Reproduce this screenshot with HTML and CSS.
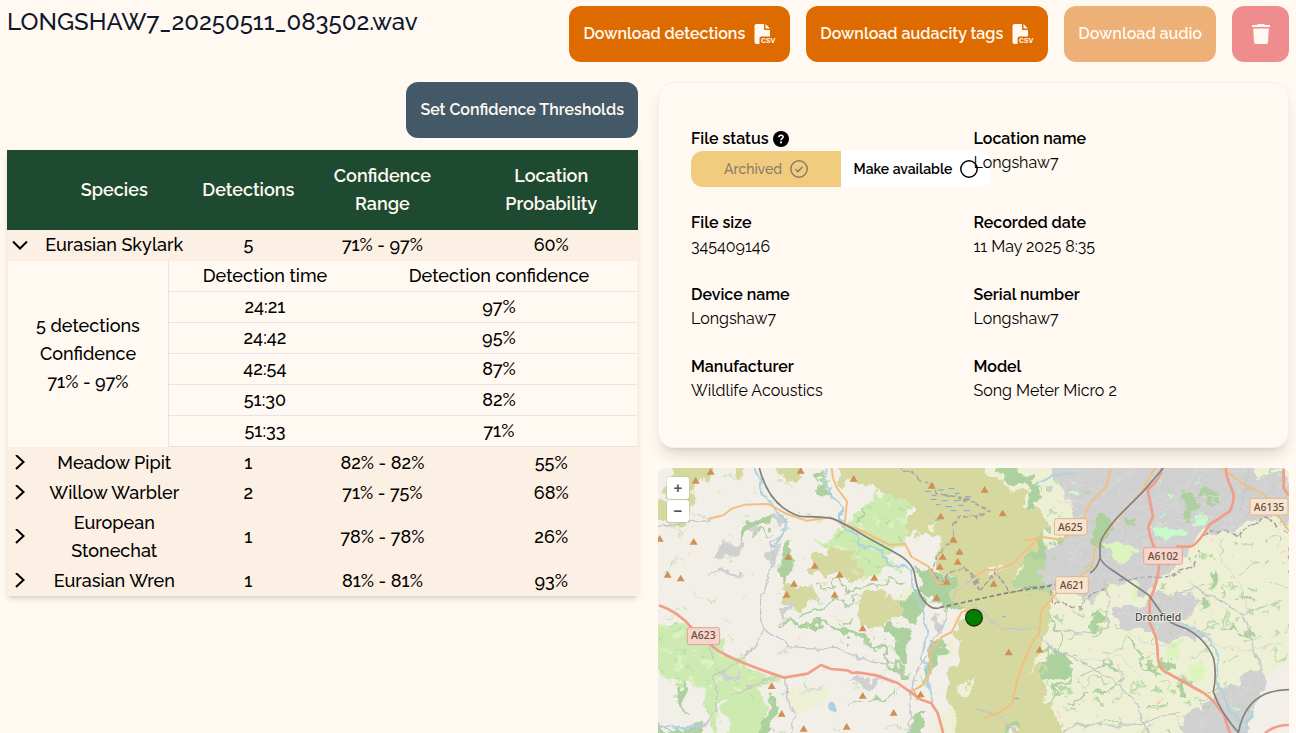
FILE: index.html
```html
<!DOCTYPE html>
<html lang="en">
<head>
<meta charset="utf-8">
<meta name="viewport" content="width=device-width, initial-scale=1">
<title>LONGSHAW7_20250511_083502.wav</title>
<link rel="stylesheet" href="styles.css">
</head>
<body>
<header class="top">
  <h1>LONGSHAW7_20250511_083502.wav</h1>
  <div class="actions">
    <button class="btn orange">Download detections
      <svg class="csv" viewBox="0 0 22 22"><path fill="currentColor" d="M2.500 1H10v5.200c0 .5.4.8.800.8H16v6.500H7.500A2 2 0 0 0 5.500 15.500V21h-3A2 2 0 0 1 .5 19V3a2 2 0 0 1 2-2zM11.500 1 16 5.500h-4.500z"/><text x="7" y="20">CSV</text></svg></button>
    <button class="btn orange">Download audacity tags
      <svg class="csv" viewBox="0 0 22 22"><path fill="currentColor" d="M2.500 1H10v5.200c0 .5.4.8.800.8H16v6.500H7.500A2 2 0 0 0 5.500 15.500V21h-3A2 2 0 0 1 .5 19V3a2 2 0 0 1 2-2zM11.500 1 16 5.500h-4.500z"/><text x="7" y="20">CSV</text></svg></button>
    <button class="btn orange" disabled>Download audio</button>
    <button class="btn red" disabled aria-label="Delete file"><svg width="20" height="22" viewBox="0 0 20 22"><path fill="currentColor" d="M7 1h6l1 1h4q1 0 1 1v1H1V3q0-1 1-1h4zM2.200 5.500h15.600L17 19q-.1 2-2 2H5q-1.900 0-2-2z"/></svg></button>
  </div>
</header>
<main class="content">
  <section class="left">
    <button class="btn slate">Set Confidence Thresholds</button>
    <table class="species">
      <colgroup><col class="c-toggle"><col class="c-name"><col class="c-count"><col class="c-range"><col></colgroup>
      <thead><tr><th></th><th>Species</th><th>Detections</th><th>Confidence<br>Range</th><th>Location<br>Probability</th></tr></thead>
      <tbody>
        <tr><td><button class="chev" aria-label="Collapse"><svg viewBox="0 0 16 16"><path d="M1 4.500 8 11.500 15 4.500"/></svg></button></td><td>Eurasian Skylark</td><td>5</td><td>71% - 97%</td><td>60%</td></tr>
        <tr><td colspan="5" class="detail">
          <div class="detail-box">
            <p>5 detections<br>Confidence<br>71% - 97%</p>
            <table class="times">
              <thead><tr><th>Detection time</th><th>Detection confidence</th></tr></thead>
              <tbody>
                <tr><td>24:21</td><td>97%</td></tr>
                <tr><td>24:42</td><td>95%</td></tr>
                <tr><td>42:54</td><td>87%</td></tr>
                <tr><td>51:30</td><td>82%</td></tr>
                <tr><td>51:33</td><td>71%</td></tr>
              </tbody>
            </table>
          </div>
        </td></tr>
        <tr><td><button class="chev" aria-label="Expand"><svg viewBox="0 0 16 16"><path d="M4 0l7.500 7L4 14"/></svg></button></td><td>Meadow Pipit</td><td>1</td><td>82% - 82%</td><td>55%</td></tr>
        <tr><td><button class="chev" aria-label="Expand"><svg viewBox="0 0 16 16"><path d="M4 0l7.500 7L4 14"/></svg></button></td><td>Willow Warbler</td><td>2</td><td>71% - 75%</td><td>68%</td></tr>
        <tr><td><button class="chev" aria-label="Expand"><svg viewBox="0 0 16 16"><path d="M4 0l7.500 7L4 14"/></svg></button></td><td>European<br>Stonechat</td><td>1</td><td>78% - 78%</td><td>26%</td></tr>
        <tr><td><button class="chev" aria-label="Expand"><svg viewBox="0 0 16 16"><path d="M4 0l7.500 7L4 14"/></svg></button></td><td>Eurasian Wren</td><td>1</td><td>81% - 81%</td><td>93%</td></tr>
      </tbody>
    </table>
  </section>
  <section class="right">
    <dl class="card">
      <div><dt>File status <svg class="help" viewBox="0 0 16 16"><circle cx="8" cy="8" r="8"/><path d="M5.900 6.200C6 4.900 6.900 4.300 8 4.300s2.100.7 2.100 1.800C10.100 7.600 8 7.600 8 9.200" fill="none" stroke="#fff" stroke-width="1.600"/><circle cx="8" cy="11.400" r="1.100" fill="#fff"/></svg></dt>
        <dd class="toggle">
          <button class="archived" disabled>Archived <svg viewBox="0 0 18 18"><circle cx="9" cy="9" r="8.200"/><path d="m5.500 9.200 2.400 2.400 4.700-4.800"/></svg></button>
          <button class="available">Make available <svg viewBox="0 0 18 18"><circle cx="9" cy="9" r="8.200"/></svg></button>
        </dd></div>
      <div><dt>Location name</dt><dd>Longshaw7</dd></div>
      <div><dt>File size</dt><dd>345409146</dd></div>
      <div><dt>Recorded date</dt><dd>11 May 2025 8:35</dd></div>
      <div><dt>Device name</dt><dd>Longshaw7</dd></div>
      <div><dt>Serial number</dt><dd>Longshaw7</dd></div>
      <div><dt>Manufacturer</dt><dd>Wildlife Acoustics</dd></div>
      <div><dt>Model</dt><dd>Song Meter Micro 2</dd></div>
    </dl>
    <div class="map">
      <svg class="tiles" viewBox="9 24 1893 795" preserveAspectRatio="xMidYMin slice" role="img" aria-label="Map of the recorder location">
        <defs>
          <filter id="rough" filterUnits="userSpaceOnUse" x="-60" y="-40" width="2040" height="920" color-interpolation-filters="sRGB">
            <feTurbulence type="fractalNoise" baseFrequency="0.018" numOctaves="4" seed="7"/>
            <feDisplacementMap in="SourceGraphic" scale="80" xChannelSelector="R" yChannelSelector="G"/>
          </filter>
          <filter id="wiggle" filterUnits="userSpaceOnUse" x="-60" y="-40" width="2040" height="920" color-interpolation-filters="sRGB">
            <feTurbulence type="fractalNoise" baseFrequency="0.025" numOctaves="3" seed="3"/>
            <feDisplacementMap in="SourceGraphic" scale="28" xChannelSelector="R" yChannelSelector="G"/>
          </filter>
          <path id="peak" d="M0-11 12 9H-12z" fill="#d08f55"/>
          <pattern id="hedge" width="260" height="210" patternUnits="userSpaceOnUse">
            <g fill="none" stroke="#b9d9a8" stroke-width="5">
              <path d="M12 40l24-12 18 4M70 95l35-18 20 6M150 30l-10 30 18 18M196 120l30-20 22 2M40 160l25 10 30-14M140 180l40-16M222 30l20 24M110 130l-12 26"/>
              <path stroke-width="10" d="M176 66l20-14M24 108l10-22M226 172l18 10"/>
            </g>
            <g fill="#f8c9ae"><path d="M60 60h6v6h-6zM120 20h8v5h-8zM205 84h6v7h-6zM88 190h9v5h-9zM170 142h6v6h-6zM10 135h6v6h-6z"/></g>
          </pattern>
          <pattern id="lanes" width="330" height="250" patternUnits="userSpaceOnUse">
            <g fill="none" stroke="#c4dfb2" stroke-width="4"><path d="M30 70l40-8 12 10M210 40l30 8M120 150l18 20 34 4M260 180l26-18M50 210l34-8"/></g>
            <g fill="#fad9c0"><path d="M100 40h10v6h-10zM180 110h7v7h-7zM290 90h9v6h-9zM20 140h7v6h-7zM220 220h9v7h-9z"/></g>
          </pattern>
          <pattern id="streets" width="120" height="110" patternUnits="userSpaceOnUse">
            <path d="M0 30l60-14 60 14M20 110l24-60 50-20L110 0M50 50l30 60M0 84l40-10" fill="none" stroke="#dddcdc" stroke-width="2"/>
            <path fill="#c3f0cf" d="M64 58l10-4 6 7-9 6z"/><path fill="#b3d6a2" d="M96 84l10-6 2 10-9 3z"/>
          </pattern>
          <pattern id="crops" width="90" height="80" patternUnits="userSpaceOnUse">
            <path d="M10 20l20-4 6 10-18 6zM60 50l16-8 8 12-14 8z" fill="#def0c4"/><path d="M50 10l14 8M8 60l20 8M70 26l-8 18" stroke="#b6daa2" stroke-width="4"/>
          </pattern>
        </defs>
        <rect x="9" y="24" width="1893" height="900" fill="#f2efe9"/>
        <g filter="url(#rough)">
          <rect x="-40" y="-20" width="1000" height="860" fill="url(#lanes)"/>
          <!-- farmland in the east -->
          <path fill="#eef0d5" d="M1020-20h960v604l-148 40-60 130-60 140H1160l-40-300z"/>
          <path fill="#eef0d5" d="M400 690l60-20 60 30-20 50-80 10zM880 690l60 20 80 150H850z"/>
          <path fill="url(#hedge)" d="M1020-20h960v604l-148 40-60 130-60 140H1160l-40-300z"/>
          <!-- pasture and woodland -->
          <g fill="#cdebb0">
            <path d="M-30 510l109-25 90 70 90 50 110 40-40 60-120 20-20 134-60-190-50 10-109-70z"/>
            <path d="M220 720l90-40 30 179H225zM560 200l60-60 70-50 60 40 20 120-80 30 40 50-100 20-90-80-60-20z"/>
            <path d="M940 740l90 30 60 79H930z"/>
          </g>
          <path fill="url(#crops)" d="M-30 510l109-25 90 70 90 50 110 40-40 60-120 20-20 134-60-190-50 10-109-70zM560 200l60-60 70-50 60 40 20 120-80 30 40 50-100 20-90-80-60-20z"/>
          <g fill="#add19e">
            <path d="M385 260l25-12-4 50-14 78h-14zM490 60l22-10 2 80-20-30zM260 190l60-20 50 15-30 16-60 10-30 20zM290 235l50-16-20 24zM690 505l70-5 20 30-15 20v60l-30 5-5-50-20-20-30-20zM740 400l50-20 20 60-20 50-50-15z"/>
            <path d="M780 330l40-10 60 50 30 10 60-50v100l-90 20-50-15-40-60zM815 540l45-20 20 30-40 80-40 60zM80 670l20 30v60l-12-10-10-50zM330 740l18-20 4 99h-28zM-30 780l99 25 60-10 40 50H-30zM750 790l60-30-20 89h-50z"/>
            <path d="M1040 24l4 34 60 18 26 36 5 120-42 76 10 60 60 20 42-30-10-90-30-40-10-30-4-100-30-60-40-24zM1320 140l40 10 15 40-40 60-30-30zM1060 150l60-25-5 55-50-20zM1170 560l60 10 25 60-60 30-40-20zM1160 610l-60 30-50 90-5 119 60-70 50-60zM1300 470l20-20 15 50-25 10zM1510 590h40l10 40-50-10zM1560 680l60-20-50 50zM1660 340l30-20-10 60-15 10zM1630 440l30-30-10 50-15 8z"/>
          </g>
          <g fill="none" stroke="#add19e" stroke-width="10">
            <path d="M380 485q70 20 130 12 60 20 120 50 60 20 140 120"/>
            <path d="M490 385q50-15 100 0l90-8 60-10M430 465q60 0 100-30l60-30M590 735l60-20M630 130l-20 70M560 500l30-40M660 720l50-30" stroke-width="7"/>
            <path d="M1150 400l50 80 10 80 40 70-70 100-10 110M1280 650l60-30 60 8M1320 700l80-40M1240 720l60-10M1420 540l40 60 70 40M1700 500l50 20 40-10M1740 400l60 20M1480 740l60-20" stroke-width="7"/>
          </g>
          <!-- moorland -->
          <g fill="#d6d99f">
            <path d="M540-20h430v464l-60 0-20-60-40-60 10-80-100-30 10-70-80-50-70-20-50 10-30-40z"/>
            <path d="M955-20h75l10 90 70 30 10 40 36 10 10 40-25 60-30 60-35 20 20 60 90-20 20 100-30 60-50 100-40 150-50 60-80-10-100-120 60-130-10-100z"/>
            <path d="M1060 640l110-30-10 110 30 30v109h-90zM1165 720l35 10 0 129h-50zM345-20h108l-10 69-60 5zM60-20h135l-30 74-60 30-70 10 10-50zM215-20h55l-20 74zM-30 130l130-50 20 30-30 80-120 0z"/>
            <path d="M480 290l65-25 70 30-2 50-50 20-80-25-20-15zM365 405l40-40 60 15 10 40-40 35-40-10zM612 420l70-30 60 10 10 60-60 45-70-10zM883 730l40-30 35 60v99h-40z"/>
          </g>
          <path fill="#b8d69d" d="M1080 340l60-60 40 40v70l-80 10z"/>
          <path fill="#eef0d5" d="M1000 330l40-15 6 12-40 12zM860 550l50-25-20 50-20 20zM820 180l20 0-4 40-20-10zM910 680l50-20-6 30-40 20zM735 380l40 5-10 40-30-15zM985-20h50l10 80-40-10z"/>
          <!-- built-up areas -->
          <g fill="#d0d0d0">
            <path d="M1190-20h560l60 60 170 20v110l-188 20-60 10-90 30-40 40-50 60-90 60-90-20-60 60-80-40-70-30 10-90 60-30 30-80-40-70-40-30z"/>
            <path d="M1370 440l100 0 20-40h120l20 30-40 60 60 30-20 30-50-20-60 20-20-40-60 0-50-20zM1650 730l90-50 70-70 30 60-30 60 60 30 30 99H1640zM1580 770l50-20 60 109h-110z"/>
            <path d="M355 172q20-12 40 12l-20 18-18-12zM175 285q20-40 90-55l-5 25-50 42zM165 350l80-25 10 10-60 20zM285 190l30 20 10 20-20 8zM580 660l40-20 90 20-60 10zM190 630l60-10-40 50zM330 250l35 10-10 60-20-20zM388 420h8v60h-10zM835 470l20-12 6 40-20-4z"/>
          </g>
          <path fill="url(#streets)" d="M1190-20h560l60 60 170 20v110l-188 20-60 10-90 30-40 40-50 60-90 60-90-20-60 60-80-40-70-30 10-90 60-30 30-80-40-70-40-30zM1370 440l100 0 20-40h120l20 30-40 60 60 30-20 30-50-20-60 20-20-40-60 0-50-20zM1650 730l90-50 70-70 30 60-30 60 60 30 30 99H1640z"/>
          <path fill="#dcf5bd" d="M1345 245l60-15 45 30-10 40-50 25-30-40zM1420 380l40 0-10 30zM1540 540l40 10-15 50-25-20zM1610 620l50-10-10 50-35-10z"/>
          <path fill="#add19e" d="M1308 222l24-75 38 16 8 34-34 66zM1420 168l30 20-8 20-22-8zM1575 90l50 15 20 40-40 20-10-30-30-10zM1640 90l30 10 10 40-20-8zM1190 230l40 10 0 14-30-6z"/>
          <path fill="#c8facc" d="M1500 200l60-10 30 30-50 24-40-14zM1610 180l50 0 0 30-40-6zM1540 90l20 8-10 16-16-10zM1245 90l20 0-4 24-20-8z"/>
          <path fill="#f2efe9" d="M1790 760l40-50 150-10v170H1790z"/>
        </g>
        <!-- water -->
        <g filter="url(#wiggle)" fill="none" stroke="#aad3df" stroke-width="6">
          <path d="M300 4l16 80 40 60 40 40-10 30-30 50M510 4l8 90 40 50 0 50 50 30 10 38 60 10 30 45 60 10 10 60 30 80 10 60-25 70 25 20v60l15 60M-9 790l90 15 60-10"/>
          <path d="M1140 66l60-20 66-8M1590 490l60 40 45 55-10 90 40 80 50 79M1775 800l20-60"/>
        </g>
        <path fill="#aad3df" d="M520 732q14-16 22 8t-8 14q-18 0-14-22z"/>
        <path stroke="#73a9dd" stroke-width="3" d="M810 94h18M850 90h16M880 86h18M830 106h14M870 108h18M900 100h14M826 118h18M862 122h16M896 122h20M842 134h14M870 140h22M910 136h16M886 152h18M930 110h18M926 152h18M904 276h16M840 180h14M1043 470h8M1078 715h14"/>
        <!-- minor roads -->
        <g filter="url(#wiggle)" fill="none" stroke="#c6c5c9" stroke-width="4" stroke-linejoin="round">
          <path d="M-9 210l118-30 60-5M400 200l-50 50 6 60-22 80-20 20 0 60 14 40-65 90-90 50 12 100-30 40-80 40-64-40M328 510l70 50 100 5 60 5 60 30 90 10 50 40M395 655l4 70 18 40-10 74M160 560l20 40M370 645l-80 30-60 30M960 350l-60 40-30 90-50 100-50 90-10 169"/>
          <path d="M960 440l80 70 100-5 60 70 100 40 90 60 60 60 40 104M1200 510l100 10 60-20 0-80-10-60M1560 400l60-10 60 20 80 50 120-40M1780 4l-20 150M1760 460l30 100 30 60M1220 839l40-50 160 10 150-40M960 740l90 40 60 59"/>
          <path stroke="#dcdad6" stroke-width="3" d="M1400 500l60 50 100 10M1500 340l-20 60M1600 360l20 60 60 40M1700 300l60 80 10 80M1280 600l120-10 60 60M1400 620l0 80M1640 540l120 30 120-20M620 560l40-60M700 620l-30 60M440 700l60-20M120 620l-40-60M60 540l-40 80M1320 640l-40 60M1500 240l-30 80M1240 60l100 40 70-50M1200 120l80 10M1400 130l100 20 80-50 120 10M1440 230l120-50 140-10M1240 300l100 10"/>
        </g>
        <g filter="url(#wiggle)" fill="none" stroke="#aaa0a2" stroke-width="5" stroke-dasharray="16 7">
          <path d="M725 12l100 62 30 24 115 34M960 168l-50 0-20 70-30 40-32 50 20 40 74-45 38 32M960 130l46 20-46 20"/>
          <path d="M960 360l14 40 52-70 30 70 84-20 40 0 10 50 90 12 30-40 40-20M1640 224l50-10 60 16 68-60 90 50-6 130 30 8M1390 360l80-10 80 0 60-30 24-50"/>
        </g>
        <!-- secondary and primary roads -->
        <g fill="none" stroke="#f3bf80" stroke-width="6" stroke-linejoin="round">
          <path d="M160 176l45-10 25-20 40-12 70-2 55 30 60 20 70-10 40 20 50 18 90 45 45-4 20 40 50 28 28 50 20 0M530 24l4 30 12 30 30 40-8 80M960 446l-40 10-30 60-30 15-36 50 5 50-22 40-30 20 10 30M960 350l30-20 35 0 50-20 30-30 40-40M1110 242l60-10 50 8 60-50 24-60 50-50 12-53M1500 24l-40 70-80 90-60 80-10 60-100 70-50 56-8 70-16 20-20 40-30 80-14 70-35 25-50 20"/>
          <path d="M1698 24l70 50 60 30 74 110"/>
        </g>
        <g fill="none" stroke="#f29d86" stroke-width="8" stroke-linejoin="round">
          <path d="M12 436q60 20 100 70M160 545q20 40 228 108l70-12 40-26 30 12 50 4 14 8 16-2 60 10 60 22 70 50 30 10 20 30 14 50 5 30"/>
          <path d="M1520 24q0 30-42 65l16 80-14 30q4 40 34 100-4 70-30 120l0 70q24 40 24 90t30 60l108 60q30 20 60 65l20 60"/>
          <path d="M1713 24q0 30 16 60t-5 70l-60 40q-40 66-60 66h-40M1886 24v60q6 10 16 22M1830 819q30-24 72-24"/>
        </g>
        <g fill="none" stroke="#818181" stroke-width="5" stroke-linejoin="round">
          <path d="M313 24q20 80 70 118 40 30 70 28 50 0 80 6 20 6 100 54l90 50q50 26 56 64 10 70 44 94 14 10 30 6"/>
          <path stroke-dasharray="14 8" d="M853 443l197-43 240-42"/>
          <path d="M1525 24l-60 70-80 80q-50 60-50 80v40q-10 35-30 45M1335 294q10 20 36 36l110 75 50 70q20 18 60 30 60 30 85 90 10 50-1 100 20 60 76 124M1750 819q24-130 152-130"/>
        </g>
        <!-- summits -->
        <g>
          <use href="#peak" x="122" y="62"/><use href="#peak" x="167" y="35"/><use href="#peak" x="437" y="32"/><use href="#peak" x="596" y="56"/><use href="#peak" x="830" y="77"/><use href="#peak" x="857" y="169"/><use href="#peak" x="14" y="236"/><use href="#peak" x="116" y="245"/><use href="#peak" x="38" y="344"/><use href="#peak" x="77" y="355"/><use href="#peak" x="400" y="290"/><use href="#peak" x="479" y="317"/><use href="#peak" x="554" y="344"/><use href="#peak" x="417" y="371"/><use href="#peak" x="395" y="404"/><use href="#peak" x="539" y="404"/><use href="#peak" x="658" y="353"/><use href="#peak" x="623" y="505"/><use href="#peak" x="896" y="239"/><use href="#peak" x="914" y="275"/><use href="#peak" x="863" y="290"/><use href="#peak" x="908" y="305"/><use href="#peak" x="854" y="320"/><use href="#peak" x="875" y="365"/><use href="#peak" x="845" y="413"/><use href="#peak" x="350" y="678"/><use href="#peak" x="380" y="761"/><use href="#peak" x="446" y="806"/><use href="#peak" x="575" y="800"/><use href="#peak" x="623" y="707"/><use href="#peak" x="716" y="758"/><use href="#peak" x="797" y="703"/><use href="#peak" x="989" y="89"/><use href="#peak" x="1043" y="160"/><use href="#peak" x="1016" y="371"/><use href="#peak" x="1061" y="577"/><use href="#peak" x="1154" y="569"/>
        </g>
        <!-- road shields and place names -->
        <g stroke-width="3">
          <g fill="#f7d4cc" stroke="#e0a396"><rect x="97" y="503" width="97" height="51" rx="6"/><rect x="1466" y="263" width="116" height="50" rx="6"/></g>
          <g fill="#f8e3cf" stroke="#dcb791"><rect x="1198" y="176" width="98" height="49" rx="6"/><rect x="1202" y="350" width="98" height="50" rx="6"/><rect x="1785" y="115" width="114" height="50" rx="6"/></g>
        </g>
        <g class="map-text"><text x="145" y="538">A623</text><text x="1246" y="212">A625</text><text x="1251" y="387">A621</text><text x="1524" y="299">A6102</text><text x="1842" y="152">A6135</text><text class="town" x="1509" y="483">Dronfield</text></g>
        <circle cx="957" cy="473" r="25" fill="#008000" stroke="#1c331c" stroke-width="4"/>
      </svg>
      <div class="zoom"><button aria-label="Zoom in">+</button><button aria-label="Zoom out">−</button></div>
    </div>
  </section>
</main>
</body>
</html>
```
FILE: styles.css
```css
* { box-sizing: border-box; }
body {
  margin: 0;
  padding: 6px 7px 0;
  min-height: 100vh;
  display: flex;
  flex-direction: column;
  gap: 20px;
  background: #fff9f2;
  color: #000;
  font: 500 18px/28px Raleway, Lato, sans-serif;
}
button { font: inherit; color: inherit; border: 0; padding: 0; background: none; }
h1, p, dl, dd { margin: 0; }

.top { display: flex; justify-content: space-between; align-items: flex-start; }
h1 { font-size: 24px; line-height: 32px; font-weight: 500; color: #0f172a; }
.actions { display: flex; gap: 16px; }
.btn {
  display: flex;
  align-items: center;
  justify-content: center;
  gap: 9px;
  height: 56px;
  padding: 0 14px;
  border-radius: 12px;
  color: #fff9f2;
  font-size: 16px;
  font-weight: 600;
  line-height: 24px;
  white-space: nowrap;
}
.btn:disabled { opacity: .5; }
.orange { background: #dd6b00; }
.red { background: #e0242c; width: 57px; }
.slate { background: #435967; }
.csv { width: 22px; height: 22px; }
.csv text { font: 700 8px "Liberation Mono", monospace; fill: currentColor; }

.content {
  flex: 1;
  display: grid;
  grid-template-columns: minmax(0, 1fr) minmax(0, 1fr);
  gap: 20px;
}
.left { display: flex; flex-direction: column; align-items: flex-end; gap: 12px; }
.species {
  width: 100%;
  table-layout: fixed;
  border-collapse: collapse;
  text-align: center;
  box-shadow: 0 4px 6px -1px rgb(0 0 0 / .12), 0 2px 4px -2px rgb(0 0 0 / .12);
}
.c-toggle { width: 4%; }
.c-name { width: 26%; }
.c-count { width: 16.5%; }
.c-range { width: 26%; }
th { font-weight: inherit; padding: 1px 0; }
td { padding: 1px 0; }
.species > thead th { padding: 12px 0; background: #1e4a31; color: #fff9f2; font-weight: 600; }
.species > tbody > tr { background: #fcefe4; }
.chev { display: block; width: 16px; height: 16px; margin: 0 auto; }
.chev svg { display: block; width: 16px; height: 16px; fill: none; stroke: currentColor; stroke-width: 2; }
.detail { padding: 1px; }
.detail-box { display: flex; background: #fff9f2; }
.detail-box p { flex: 0 0 160px; align-self: center; }
.times { flex: 1; table-layout: fixed; border-collapse: separate; border-spacing: 0; border-left: 1px solid #e1e4ec; }
.times th:first-child { width: 41%; }
.times th, .times td { border-bottom: 1px solid #e1e4ec; }

.right { display: flex; flex-direction: column; gap: 20px; }
.card {
  display: grid;
  grid-template-columns: minmax(0, 1fr) minmax(0, 1fr);
  row-gap: 24px;
  padding: 44px 32px;
  border: 1px solid #eef1f5;
  border-radius: 16px;
  box-shadow: 0 10px 15px -3px rgb(0 0 0 / .12), 0 4px 6px -4px rgb(0 0 0 / .12);
  font-size: 16px;
  line-height: 24px;
}
dt { font-weight: 600; }
dd { font-weight: 400; }
.help { width: 16px; height: 16px; vertical-align: -3px; }
.toggle { display: flex; width: 300px; border-radius: 12px; overflow: hidden; font-weight: 600; font-size: 14px; }
.toggle button { flex: 1; height: 36px; display: flex; align-items: center; justify-content: center; gap: 8px; background: #fff; white-space: nowrap; }
.toggle .archived { background: #f1cc7f; color: #8a7b6a; font-weight: 500; }
.toggle svg { width: 18px; height: 18px; fill: none; stroke: currentColor; stroke-width: 1.5; }

.map { position: relative; flex: 1; min-height: 265px; overflow: hidden; border-radius: 8px 8px 0 0; }
.tiles { position: absolute; inset: 0; width: 100%; height: 100%; }
.map-text { font: 500 31px "Noto Sans", sans-serif; fill: #654f3a; text-anchor: middle; }
.map-text .town { fill: #444; stroke: #f4f1e8; stroke-width: 5px; paint-order: stroke; }
.zoom { position: absolute; left: 9px; top: 9px; width: 22px; display: grid; gap: 1px; }
.zoom button { height: 22px; background: #fff; color: #555; border-radius: 2px; font: 700 15px/20px "Liberation Sans", sans-serif; box-shadow: 0 0 1px #777; }
```
